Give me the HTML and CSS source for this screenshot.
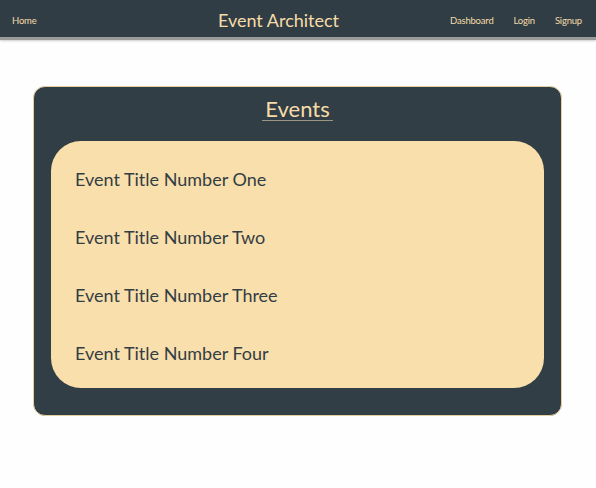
FILE: index.html
```html
<!DOCTYPE html>
<html>
<head>
<meta charset="utf-8">
<link rel="stylesheet" href="styles.css">
</head>
<body>
<nav class="nav">
  <a class="nav-link">Home</a>
  <div class="brand">Event Architect</div>
  <div class="nav-right">
    <a class="nav-link">Dashboard</a>
    <a class="nav-link">Login</a>
    <a class="nav-link">Signup</a>
  </div>
</nav>
<main class="main">
  <section class="card">
    <h1 class="card-title"><span class="title-text">Events</span></h1>
    <ul class="events">
      <li class="event">Event Title Number One</li>
      <li class="event">Event Title Number Two</li>
      <li class="event">Event Title Number Three</li>
      <li class="event">Event Title Number Four</li>
    </ul>
  </section>
</main>
</body>
</html>
```
FILE: styles.css
```css
* { box-sizing: border-box; }
html, body { margin: 0; padding: 0; }
body {
  background: #fefefe;
  font-family: Lato, "Noto Sans", sans-serif;
  width: 596px;
  height: 488px;
  overflow: hidden;
}
.nav {
  height: 40px;
  background: #313d44;
  border-bottom: 3px solid #9a9a9a;
  box-shadow: 0 1px 2px rgba(0,0,0,0.2);
  display: grid;
  grid-template-columns: 1fr auto 1fr;
  align-items: center;
  padding: 3px 14px 0 12px;
}
.nav-link {
  color: #f3dcaa;
  font-size: 9.5px;
  letter-spacing: -0.2px;
}
.brand {
  color: #f6dca8;
  font-size: 18px;
  margin-right: 37px;
}
.nav-right {
  display: flex;
  justify-content: flex-end;
  gap: 20px;
}
.main {
  padding: 46px 34px 0 33px;
}
.card {
  background: #323e45;
  border: 1px solid #e6cf9e;
  border-radius: 12px;
  height: 330px;
  padding: 2px 17px 0 17px;
}
.card-title {
  margin: 0;
  text-align: center;
  font-weight: normal;
  line-height: 1;
  height: 52px;
}
.title-text {
  display: inline-block;
  color: #f6dca8;
  font-size: 22px;
  padding: 0 3px 0;
  border-bottom: 1px solid #9b9582;
}
.events {
  list-style: none;
  margin: 0;
  padding: 26px 24px 0;
  background: #f9dfab;
  border-radius: 30px;
  height: 247px;
}
.event {
  color: #333d44;
  font-size: 18px;
  height: 58px;
  line-height: 24px;
}
```
